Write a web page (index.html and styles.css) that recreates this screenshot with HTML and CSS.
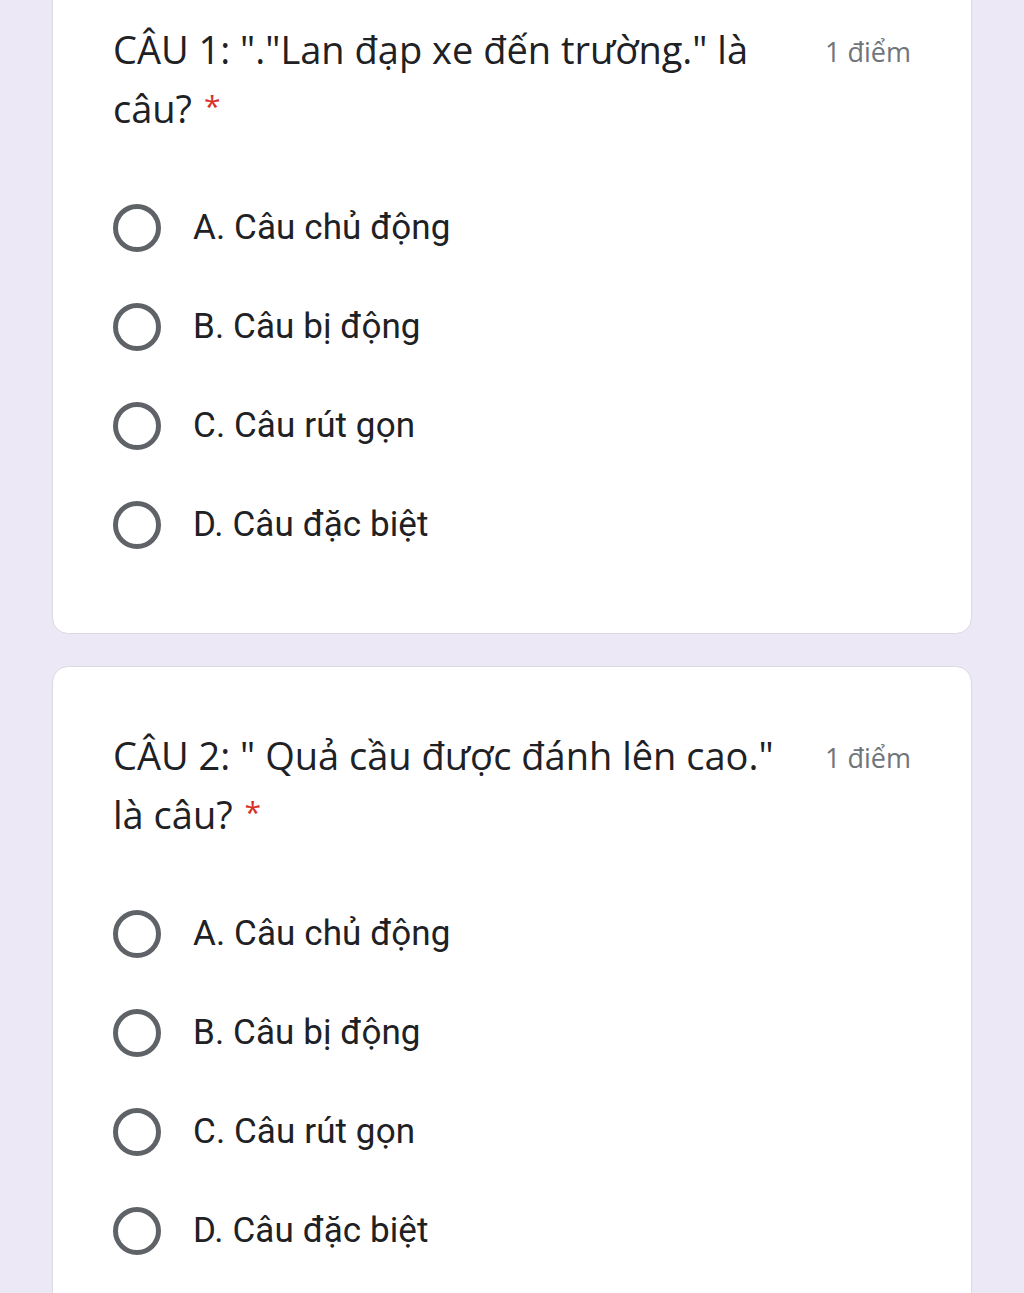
FILE: index.html
```html
<!DOCTYPE html>
<html lang="vi">

<head>
    <meta charset="UTF-8">
    <meta name="viewport" content="width=device-width, initial-scale=1.0">
    <title>Bài kiểm tra</title>
    <link rel="stylesheet" href="styles.css">
</head>

<body>
    <div class="form">
        <!-- câu 1 -->
        <div class="card">
            <div class="q-head">
                <div class="q-title">CÂU 1: "."Lan đạp xe đến trường." là câu?<span class="req">*</span></div>
                <div class="q-point">1 điểm</div>
            </div>
            <ul class="options">
                <li><span class="radio"></span><span class="label">A. Câu chủ động</span></li>
                <li><span class="radio"></span><span class="label">B. Câu bị động</span></li>
                <li><span class="radio"></span><span class="label">C. Câu rút gọn</span></li>
                <li><span class="radio"></span><span class="label">D. Câu đặc biệt</span></li>
            </ul>
        </div>

        <!-- câu 2 -->
        <div class="card">
            <div class="q-head">
                <div class="q-title">CÂU 2: " Quả cầu được đánh lên cao." là câu?<span class="req">*</span></div>
                <div class="q-point">1 điểm</div>
            </div>
            <ul class="options">
                <li><span class="radio"></span><span class="label">A. Câu chủ động</span></li>
                <li><span class="radio"></span><span class="label">B. Câu bị động</span></li>
                <li><span class="radio"></span><span class="label">C. Câu rút gọn</span></li>
                <li><span class="radio"></span><span class="label">D. Câu đặc biệt</span></li>
            </ul>
        </div>
    </div>
</body>

</html>
```

FILE: styles.css
```css
body {
    margin: 0;
    background-color: #ece8f6;
    font-family: Roboto, "Noto Sans", sans-serif;
    color: #202124;
}

.form {
    margin: -40px 52px 0 52px;
    display: flex;
    flex-direction: column;
    gap: 32px;
}

.card {
    background-color: #fff;
    border: 1px solid #dcd9e3;
    border-radius: 16px;
    padding: 59px 60px 59px 60px;
}

/* tiêu đề câu hỏi + điểm */
.q-head {
    display: flex;
    align-items: flex-start;
}

.q-title {
    width: 690px;
    font-family: "Open Sans", sans-serif;
    font-size: 38px;
    line-height: 59px;
    letter-spacing: 0;
}

.req {
    display: inline-block;
    margin-left: 12px;
    color: #d93025;
    font-size: 30px;
    line-height: 30px;
    vertical-align: 6px;
}

.q-point {
    margin-left: auto;
    padding-top: 2px;
    font-family: "Open Sans", sans-serif;
    font-size: 27px;
    line-height: 59px;
    color: #70757a;
    white-space: nowrap;
}

.options {
    list-style: none;
    margin: 40px 0 0 0;
    padding: 0;
}

.options li {
    height: 99px;
    display: flex;
    align-items: center;
    gap: 32px;
}

.radio {
    width: 48px;
    height: 48px;
    box-sizing: border-box;
    border: 5px solid #5f6368;
    border-radius: 50%;
    flex-shrink: 0;
}

.label {
    font-size: 35px;
    letter-spacing: 0.1px;
}
```
